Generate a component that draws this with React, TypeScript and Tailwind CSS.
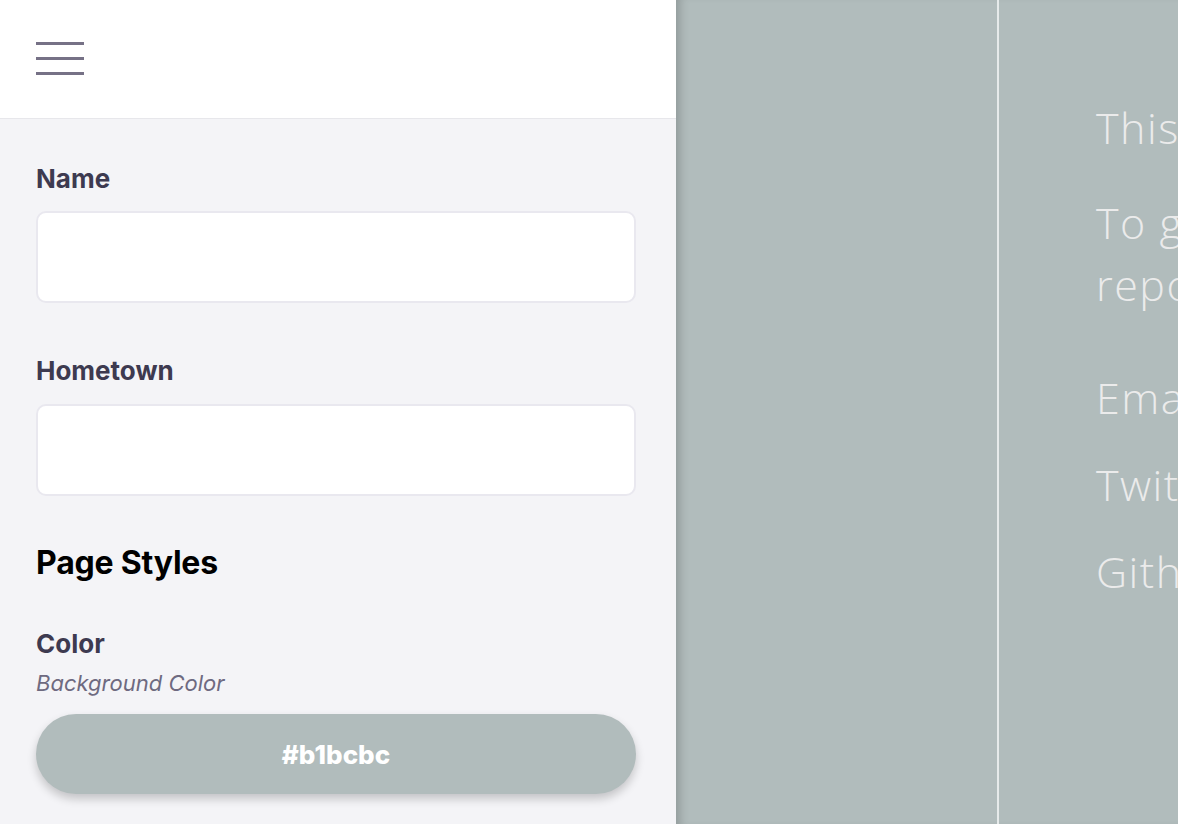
import React from "react";

export default function App() {
  return (
    <div className="flex h-[824px] w-[1178px] overflow-hidden" style={{ fontFamily: "Inter, 'Noto Sans', sans-serif" }}>
      <aside className="flex w-[676px] shrink-0 flex-col bg-[#f4f4f7]">
        <header className="flex h-[119px] shrink-0 items-center border-b border-[#e7e7eb] bg-white px-[36px]">
          <button className="flex h-[34px] w-[48px] flex-col justify-between pb-[1px]" aria-label="menu">
            <span className="block h-[3px] w-full bg-[#767186]" />
            <span className="block h-[3px] w-full bg-[#767186]" />
            <span className="block h-[3px] w-full bg-[#767186]" />
          </button>
        </header>
        <div className="flex flex-col px-[36px] pt-[40px]">
          <label className="text-[26px] font-bold leading-[40px] text-[#3d3a50]">Name</label>
          <input className="mt-[12px] h-[92px] w-[600px] rounded-[10px] border-2 border-[#e9e8ef] bg-white outline-none" />
          <label className="mt-[48px] text-[26px] font-bold leading-[40px] text-[#3d3a50]">Hometown</label>
          <input className="mt-[13px] h-[92px] w-[600px] rounded-[10px] border-2 border-[#e9e8ef] bg-white outline-none" />
          <h2 className="mt-[43px] text-[32px] font-bold leading-[48px] tracking-[-0.2px] text-black">Page Styles</h2>
          <label className="mt-[37px] text-[26px] font-bold leading-[40px] text-[#3d3a50]">Color</label>
          <p className="mt-[4px] text-[22px] italic leading-[30px] text-[#6e6a80]">Background Color</p>
          <button className="mt-[16px] h-[80px] w-[600px] rounded-full bg-[#b1bcbc] text-[26px] font-extrabold text-white shadow-[0_5px_10px_rgba(0,0,0,0.2)]">
            #b1bcbc
          </button>
        </div>
      </aside>
      <main className="flex flex-1 bg-[#b1bcbc] shadow-[inset_10px_0_10px_-6px_rgba(0,0,0,0.18)]">
        <div className="w-[321px] shrink-0" />
        <div className="w-[2px] shrink-0 bg-[#e6eaea]" />
        <div
          className="flex-1 overflow-hidden whitespace-nowrap pl-[97px] pt-[97px] text-[43px] font-light leading-[62px] tracking-[1.5px] text-[#ebebeb]"
          style={{ fontFamily: "'Open Sans', Lato, sans-serif" }}
        >
          <p>This is a preview of your page.</p>
          <p className="mt-[33px]">To get started, fork the</p>
          <p>repository on Github.</p>
          <p className="mt-[51px]">Email</p>
          <p className="mt-[25px]">Twitter</p>
          <p className="mt-[25px]">Github</p>
        </div>
      </main>
    </div>
  );
}
